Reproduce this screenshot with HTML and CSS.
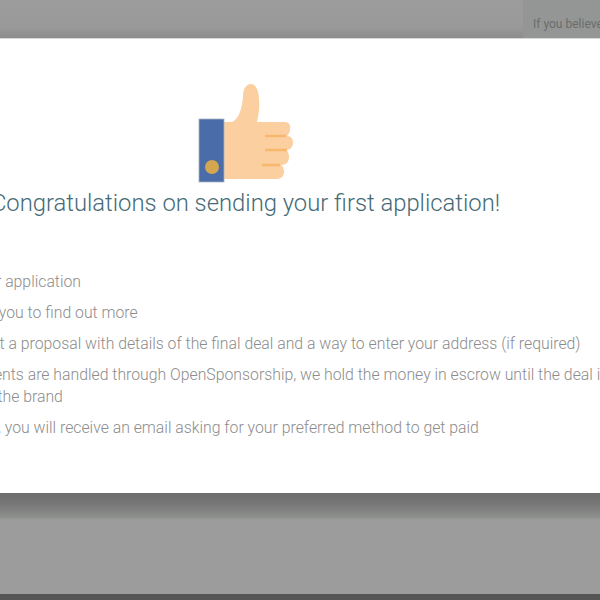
FILE: index.html
```html
<!DOCTYPE html>
<html lang="en">
<head>
    <meta charset="UTF-8">
    <title>Application sent</title>
    <link rel="stylesheet" href="styles.css">
</head>
<body>
    <div class="top-strip">
        <div class="notice">If you believe this is a mistake</div>
    </div>

    <main class="modal">
        <svg class="thumb" width="95" height="100" viewBox="0 0 95 100">
            <path fill="#fbcf9f" d="M25 39 H34 C41 36 44 25 45 14 C45 6 48 1 53 1 C58 1 61 8 61 17 C62 26 60 34 59 39 H86 C91 39 93 42 92 46 C92 49 91 51 89 53 C93 53 95 56 95 60 C95 64 92 67 88 67 C90 68 91 71 91 74 C91 79 88 82 83 82 C85 83 86 86 86 89 C86 93 83 96 79 96 H25 Z"/>
            <path stroke="#f8b86c" stroke-width="2.5" fill="none" d="M67 53 H88 M67 67 H89 M64 82 H82"/>
            <rect x="1" y="36" width="25" height="63" fill="#4a6ca8" stroke="#a9b4c4" stroke-width="0.8"/>
            <circle cx="14" cy="84" r="7" fill="#d4a650"/>
        </svg>

        <h1 class="modal-title">Congratulations on sending your first application!</h1>

        <ol class="steps">
            <li>Brand got your application</li>
            <li>They may call you to find out more</li>
            <li>You usually get a proposal with details of the final deal and a way to enter your address (if required)</li>
            <li>Now all payments are handled through OpenSponsorship, we hold the money in escrow until the deal is completed by the brand</li>
            <li>When finished, you will receive an email asking for your preferred method to get paid</li>
        </ol>
    </main>

    <div class="lower">
        <div class="lower-shade"></div>
    </div>
    <div class="bottom-bar"></div>
</body>
</html>
```

FILE: styles.css
```css
* {
    margin: 0;
    padding: 0;
    box-sizing: border-box;
}

html, body {
    height: 600px;
    overflow: hidden;
}

body {
    font-family: Roboto, 'Liberation Sans', sans-serif;
    background: #9c9c9c;
    display: flex;
    flex-direction: column;
}

.top-strip {
    height: 38px;
    flex-shrink: 0;
    display: flex;
    justify-content: flex-end;
    background: linear-gradient(180deg, #9c9c9c 0%, #9a9a9a 70%, #8c8c8c 100%);
}

.notice {
    width: 77px;
    padding: 17px 0 0 10px;
    background: #939695;
    color: #6c6c6c;
    font-size: 12px;
    line-height: 14px;
    white-space: nowrap;
    overflow: hidden;
}

.modal {
    height: 455px;
    flex-shrink: 0;
    width: 791px;
    margin-left: -150px;
    padding-top: 44px;
    background: #fff;
    border-top: 1px solid #d8d8d8;
}

.thumb {
    display: block;
    margin: 0 auto;
}

.modal-title {
    margin-top: 5px;
    font-size: 23.8px;
    font-weight: 300;
    line-height: 30px;
    color: #456a76;
    white-space: nowrap;
    text-align: center;
}

.steps {
    list-style: none;
    margin-top: 53px;
    padding: 0 26px 0 50px;
    font-size: 15.8px;
    font-weight: 300;
    line-height: 22px;
    color: #8c8c8c;
}

.steps li {
    margin-bottom: 9px;
}

.lower {
    flex: 1;
}

.lower-shade {
    height: 27px;
    background: linear-gradient(180deg, #6c6c6c 0%, #767776 40%, #8e908e 90%, #9c9c9c 100%);
}

.bottom-bar {
    height: 6px;
    flex-shrink: 0;
    background: #555;
}
```
